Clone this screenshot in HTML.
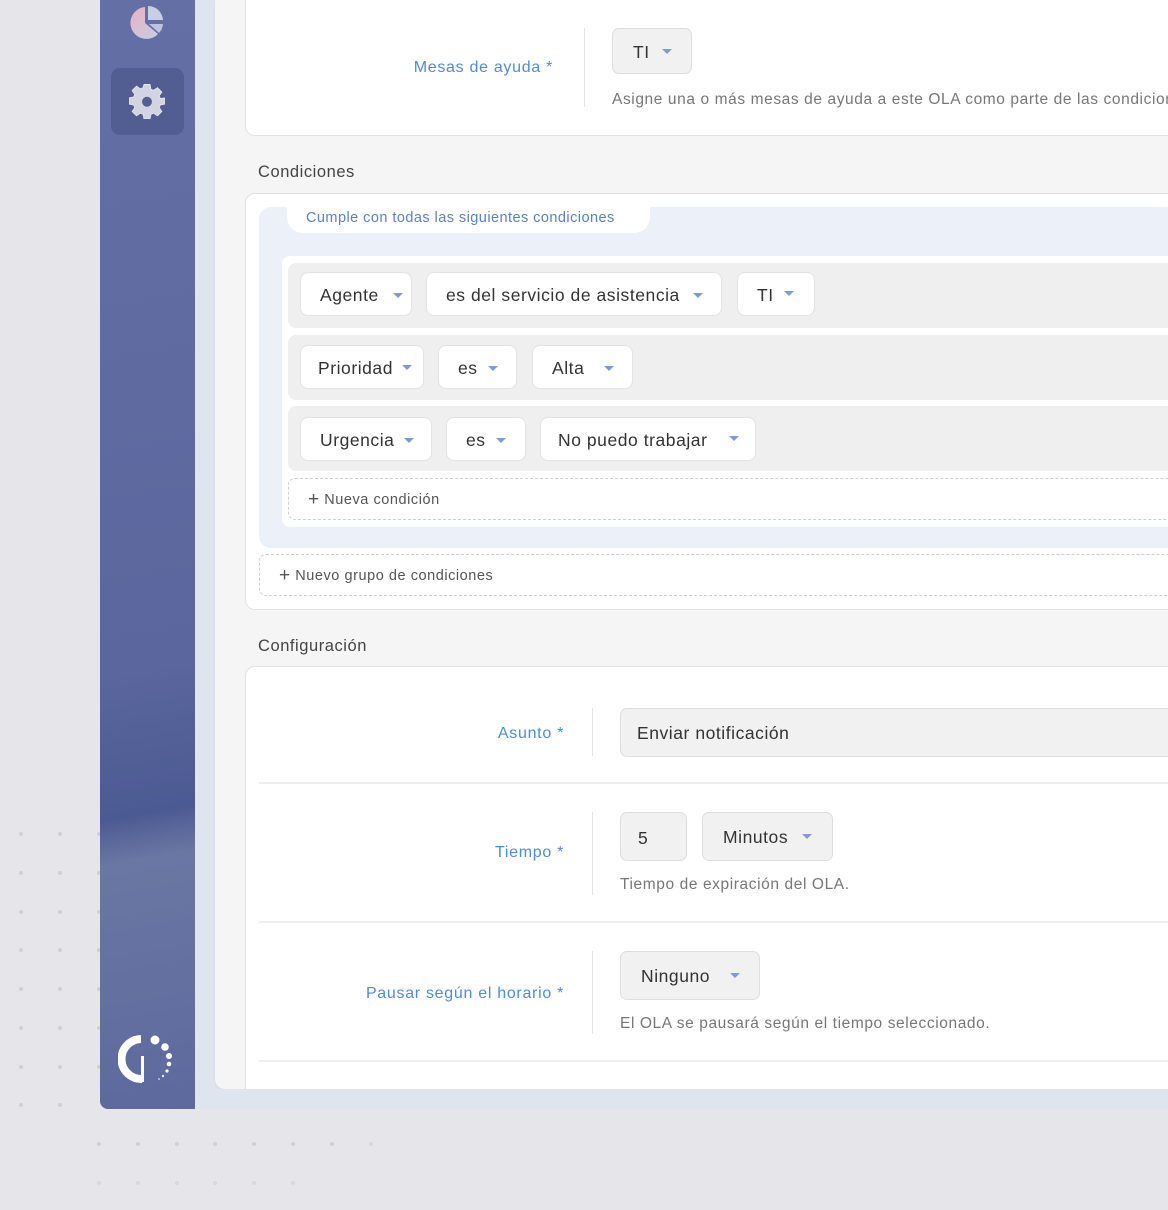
<!DOCTYPE html>
<html><head><meta charset="utf-8"><style>
*{box-sizing:border-box;margin:0;padding:0}
body{width:1168px;height:1210px;overflow:hidden;background:#e5e5ea;font-family:"Liberation Sans",sans-serif;position:relative;letter-spacing:.55px}
.a{position:absolute}
.dot{position:absolute;width:4px;height:4px;border-radius:50%;background:#cfcfd6}
.lbl{position:absolute;color:#4f8ae0;font-size:16px;text-align:right;white-space:nowrap;letter-spacing:.7px}
.pill{position:absolute;height:44px;background:#fff;border:1px solid #e3e3e3;border-radius:8px;font-size:17.5px;color:#333;line-height:44px;padding-left:19px;white-space:nowrap}
.sel{position:absolute;background:#f1f1f1;border:1px solid #dedede;border-radius:7px;font-size:17.5px;color:#333;white-space:nowrap}
.car{position:absolute;width:0;height:0;border-left:5px solid transparent;border-right:5px solid transparent;border-top:5px solid #7d9bd6}
.row{position:absolute;left:288px;width:900px;height:65px;background:#efefef;border-radius:8px}
.help{position:absolute;font-size:15.5px;color:#777;white-space:nowrap;letter-spacing:.6px}
.vd{position:absolute;width:1px;background:#e3e3e3}
.hs{position:absolute;left:259px;width:920px;height:2px;background:#f0f0f0}
.dash{position:absolute;border:1px dashed #cfcfcf;border-radius:7px;background:#fff;font-size:14.5px;color:#555}
</style></head><body>
<div class="dot" style="left:19px;top:832px"></div><div class="dot" style="left:58px;top:832px"></div><div class="dot" style="left:97px;top:832px"></div>
<div class="dot" style="left:19px;top:871px"></div><div class="dot" style="left:58px;top:871px"></div><div class="dot" style="left:97px;top:871px"></div>
<div class="dot" style="left:19px;top:910px"></div><div class="dot" style="left:58px;top:910px"></div><div class="dot" style="left:97px;top:910px"></div>
<div class="dot" style="left:19px;top:948px"></div><div class="dot" style="left:58px;top:948px"></div><div class="dot" style="left:97px;top:948px"></div>
<div class="dot" style="left:19px;top:987px"></div><div class="dot" style="left:58px;top:987px"></div><div class="dot" style="left:97px;top:987px"></div>
<div class="dot" style="left:19px;top:1026px"></div><div class="dot" style="left:58px;top:1026px"></div><div class="dot" style="left:97px;top:1026px"></div>
<div class="dot" style="left:19px;top:1065px"></div><div class="dot" style="left:58px;top:1065px"></div><div class="dot" style="left:97px;top:1065px"></div>
<div class="dot" style="left:19px;top:1103px"></div><div class="dot" style="left:58px;top:1103px"></div>
<div class="dot" style="left:97px;top:1142px"></div><div class="dot" style="left:136px;top:1142px"></div><div class="dot" style="left:175px;top:1142px"></div><div class="dot" style="left:213px;top:1142px"></div><div class="dot" style="left:252px;top:1142px"></div><div class="dot" style="left:291px;top:1142px"></div><div class="dot" style="left:330px;top:1142px"></div><div class="dot" style="left:369px;top:1142px;opacity:.6"></div>
<div class="dot" style="left:97px;top:1181px;opacity:.6"></div><div class="dot" style="left:136px;top:1181px;opacity:.6"></div><div class="dot" style="left:175px;top:1181px;opacity:.6"></div><div class="dot" style="left:213px;top:1181px;opacity:.6"></div><div class="dot" style="left:252px;top:1181px;opacity:.6"></div><div class="dot" style="left:291px;top:1181px;opacity:.6"></div>

<div class="a" style="left:195px;top:0;width:973px;height:1109px;background:#dfe5ef"></div>
<div class="a" style="left:100px;top:0;width:95px;height:1109px;border-bottom-left-radius:8px;background:linear-gradient(170deg,#6470a5 0%,#5a669d 60%,#4c5a93 73%,#6a77a3 77%,#5d699d 100%)"></div>
<svg class="a" style="left:128px;top:4px" width="38" height="38" viewBox="0 0 38 38">
<defs><linearGradient id="g1" x1="0" y1="0" x2="1" y2="1"><stop offset="0" stop-color="#e8b2c0"/><stop offset="1" stop-color="#c9cde6"/></linearGradient></defs>
<path d="M17 3A16 16 0 1 0 30 30L17 19Z" fill="url(#g1)"/>
<path d="M20 2A15 15 0 0 1 35 16H20Z" fill="#c9cde6"/>
<path d="M21 20H35A15 15 0 0 1 31 29Z" fill="#bfc3e0"/>
</svg>
<div class="a" style="left:111px;top:68px;width:73px;height:67px;border-radius:9px;background:#525e91"></div>
<svg class="a" style="left:129px;top:83px" width="36" height="36" viewBox="0 0 24 24">
<path fill="#d2d4e2" stroke="#e6e6ee" stroke-width=".6" d="M10 1h4l.6 3.1 1.8.8 2.6-1.8 2.9 2.9-1.8 2.6.8 1.8L24 10v4l-3.1.6-.8 1.8 1.8 2.6-2.9 2.9-2.6-1.8-1.8.8L14 24h-4l-.6-3.1-1.8-.8-2.6 1.8-2.9-2.9 1.8-2.6-.8-1.8L0 14v-4l3.1-.6.8-1.8L2.1 5l2.9-2.9 2.6 1.8 1.8-.8z"/>
<circle cx="12" cy="12.5" r="3.3" fill="#535f92"/>
</svg>
<svg class="a" style="left:118px;top:1033px" width="60" height="52" viewBox="0 0 60 52">
<path d="M23 6A19 19 0 0 0 24 46" fill="none" stroke="#fff" stroke-width="8"/>
<rect x="23" y="23" width="3" height="26" fill="#fff"/>
<circle cx="37" cy="7" r="4.5" fill="#fff"/><circle cx="47" cy="14" r="3.8" fill="#fff"/><circle cx="51" cy="23" r="3" fill="#fff"/><circle cx="51" cy="31" r="2.3" fill="#fff"/><circle cx="49" cy="38" r="1.6" fill="#fff"/><circle cx="45" cy="43" r="1.1" fill="#fff"/><circle cx="41" cy="46" r=".8" fill="#fff"/>
</svg>

<div class="a" style="left:215px;top:0;width:960px;height:1089px;background:#f5f5f6;border-bottom-left-radius:10px;box-shadow:0 1px 2px rgba(0,0,0,.06)"></div>

<div class="a" style="left:245px;top:-10px;width:940px;height:146px;background:#fff;border:1px solid #e2e2e2;border-radius:10px"></div>
<div class="lbl" style="right:615px;top:59px">Mesas de ayuda *</div>
<div class="vd" style="left:584px;top:28px;height:79px"></div>
<div class="sel" style="left:612px;top:28px;width:80px;height:46px;line-height:46px;padding-left:20px">TI</div><div class="car" style="left:662px;top:49px"></div>
<div class="help" style="left:612px;top:91px">Asigne una o más mesas de ayuda a este OLA como parte de las condiciones</div>

<div class="a" style="left:258px;top:163px;font-size:16.5px;color:#444">Condiciones</div>
<div class="a" style="left:245px;top:193px;width:940px;height:417px;background:#fff;border:1px solid #e2e2e2;border-radius:10px"></div>
<div class="a" style="left:259px;top:207px;width:920px;height:341px;background:#ecf0f8;border-radius:12px"></div>
<div class="a" style="left:287px;top:207px;width:363px;height:26px;background:#fff;border-radius:0 0 16px 16px"></div>
<div class="a" style="left:306px;top:210px;font-size:14.5px;color:#5a80c8;letter-spacing:.45px">Cumple con todas las siguientes condiciones</div>
<div class="a" style="left:282px;top:256px;width:900px;height:271px;background:#fff;border-radius:8px"></div>
<div class="row" style="top:263px"></div>
<div class="row" style="top:335px"></div>
<div class="row" style="top:406px"></div>
<div class="pill" style="left:300px;top:272px;width:112px">Agente</div><div class="car" style="left:393px;top:293px"></div>
<div class="pill" style="left:426px;top:272px;width:296px">es del servicio de asistencia</div><div class="car" style="left:693px;top:293px"></div>
<div class="pill" style="left:737px;top:272px;width:78px">TI</div><div class="car" style="left:784px;top:291px"></div>
<div class="pill" style="left:300px;top:345px;width:124px;padding-left:17px">Prioridad</div><div class="car" style="left:402px;top:365px"></div>
<div class="pill" style="left:438px;top:345px;width:79px">es</div><div class="car" style="left:488px;top:366px"></div>
<div class="pill" style="left:532px;top:345px;width:101px">Alta</div><div class="car" style="left:604px;top:366px"></div>
<div class="pill" style="left:300px;top:417px;width:132px">Urgencia</div><div class="car" style="left:404px;top:438px"></div>
<div class="pill" style="left:446px;top:417px;width:80px">es</div><div class="car" style="left:496px;top:438px"></div>
<div class="pill" style="left:540px;top:417px;width:216px;padding-left:17px">No puedo trabajar</div><div class="car" style="left:729px;top:436px"></div>
<div class="dash" style="left:288px;top:478px;width:900px;height:42px;line-height:42px;padding-left:19px"><span style="font-size:19px;vertical-align:-1px">+</span> Nueva condición</div>
<div class="dash" style="left:259px;top:554px;width:920px;height:42px;line-height:42px;padding-left:19px"><span style="font-size:19px;vertical-align:-1px">+</span> Nuevo grupo de condiciones</div>

<div class="a" style="left:258px;top:637px;font-size:16.5px;color:#444">Configuración</div>
<div class="a" style="left:245px;top:666px;width:940px;height:440px;background:#fff;border:1px solid #e2e2e2;border-radius:10px 0 0 0"></div>
<div class="a" style="left:215px;top:1089px;width:960px;height:20px;background:#dfe5ef"></div>
<div class="lbl" style="right:604px;top:725px">Asunto *</div>
<div class="vd" style="left:592px;top:708px;height:48px"></div>
<div class="sel" style="left:620px;top:708px;width:560px;height:49px;line-height:49px;padding-left:16px">Enviar notificación</div>
<div class="hs" style="top:782px"></div>
<div class="lbl" style="right:604px;top:844px">Tiempo *</div>
<div class="vd" style="left:592px;top:812px;height:83px"></div>
<div class="sel" style="left:620px;top:812px;width:67px;height:49px;line-height:51px;padding-left:17px">5</div>
<div class="sel" style="left:702px;top:812px;width:131px;height:49px;line-height:49px;padding-left:20px">Minutos</div><div class="car" style="left:802px;top:834px"></div>
<div class="help" style="left:620px;top:876px">Tiempo de expiración del OLA.</div>
<div class="hs" style="top:921px"></div>
<div class="lbl" style="right:604px;top:985px">Pausar según el horario *</div>
<div class="vd" style="left:592px;top:951px;height:83px"></div>
<div class="sel" style="left:620px;top:951px;width:140px;height:49px;line-height:49px;padding-left:20px">Ninguno</div><div class="car" style="left:730px;top:973px"></div>
<div class="help" style="left:620px;top:1015px">El OLA se pausará según el tiempo seleccionado.</div>
<div class="hs" style="top:1060px"></div>
</body></html>
